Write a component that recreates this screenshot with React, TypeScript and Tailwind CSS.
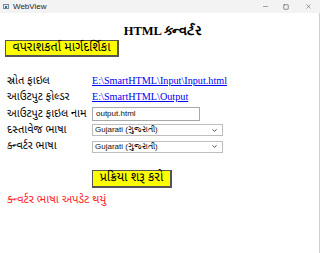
import { ChevronDown, Minus, Square, X } from 'lucide-react';

const guj = "font-['Noto_Sans_Gujarati','Lohit_Gujarati','Noto_Sans',sans-serif]";
const serif = "font-['Liberation_Serif','Times_New_Roman',serif]";
const sans = "font-['Liberation_Sans',Arial,sans-serif]";

function TitleBar() {
  return (
    <div className="flex h-[13px] items-center bg-[#f3f3f3] text-[#1f1f1f]">
      <div className="ml-[3px] flex h-[5px] w-[6px] items-center border border-[#7a8a99] bg-[#dfe8ef]">
        <div className="ml-px h-[2px] w-[2px] bg-[#2d7d9a]" />
      </div>
      <span className={`ml-[4px] text-[8px] leading-none ${sans}`}>WebView</span>
      <div className="ml-auto flex items-center">
        <Minus className="h-[7px] w-[7px] text-[#333]" strokeWidth={1.5} />
        <Square className="ml-[14px] h-[6px] w-[6px] text-[#333]" strokeWidth={2} />
        <X className="ml-[16px] mr-[8px] h-[7px] w-[7px] text-[#333]" strokeWidth={1.5} />
      </div>
    </div>
  );
}

function Row({ label, h, children }: { label: string; h: string; children: React.ReactNode }) {
  return (
    <div className={`flex items-center ${h}`}>
      <span className={`w-[85px] shrink-0 text-[11px] font-[370] leading-none text-black ${guj}`}>{label}</span>
      {children}
    </div>
  );
}

function Select({ value }: { value: string }) {
  return (
    <div className="flex h-[12px] w-[131px] items-center border border-[#bdbdbd] bg-white px-[2px]">
      <span className={`text-[8px] leading-none text-[#111] ${sans}`}>{value}</span>
      <ChevronDown className="ml-auto mr-[2px] h-[7px] w-[7px] text-[#333]" strokeWidth={3} />
    </div>
  );
}

export default function App() {
  return (
    <div className="flex h-[253px] w-[320px] flex-col overflow-hidden bg-white">
      <TitleBar />
      <div className="flex-1 border-r border-[#cfcfcf] pl-[7px]">
        <h1 className={`mt-[10px] text-center text-[12.5px] font-bold leading-[16px] text-black ${serif}`}>
          HTML ક્ન્વર્ટર
        </h1>
        <button
          type="button"
          className={`-ml-[2px] mt-[1px] flex h-[17px] w-[114px] items-center justify-center border border-[#555] border-r-2 border-b-2 bg-[#ffff00] text-[12.5px] font-normal leading-none text-black ${guj}`}
        >
          વપરાશકર્તા માર્ગદર્શિકા
        </button>

        <div className="mt-[16px] flex flex-col">
          <Row label="સ્રોત ફાઇલ" h="h-[16px]">
            <a className={`text-[10.2px] leading-none text-[#0000ee] underline ${serif}`} href="#">
              E:\SmartHTML\Input\Input.html
            </a>
          </Row>
          <Row label="આઉટપુટ ફોલ્ડર" h="h-[17px]">
            <a className={`text-[10.2px] leading-none text-[#0000ee] underline ${serif}`} href="#">
              E:\SmartHTML\Output
            </a>
          </Row>
          <Row label="આઉટપુટ ફાઇલ નામ" h="h-[16px]">
            <div className="flex h-[14px] w-[108px] items-center border border-[#a9a9a9] bg-white px-[3px]">
              <span className={`text-[8px] leading-none text-[#111] ${sans}`}>output.html</span>
            </div>
          </Row>
          <Row label="દસ્તાવેજ ભાષા" h="h-[16px]">
            <Select value="Gujarati (ગુજરાતી)" />
          </Row>
          <Row label="ક્ન્વર્ટર ભાષા" h="h-[17px]">
            <Select value="Gujarati (ગુજરાતી)" />
          </Row>
        </div>

        <button
          type="button"
          className={`ml-[85px] mt-[15px] flex h-[18px] w-[80px] items-center justify-center border border-[#555] border-r-2 border-b-2 bg-[#ffff00] text-[12.5px] font-normal leading-none text-black ${guj}`}
        >
          પ્રક્રિયા શરૂ કરો
        </button>
        <p className={`mt-[6px] text-[11.5px] font-[370] leading-[14px] text-[#ff1f1f] ${guj}`}>
          ક્ન્વર્ટર ભાષા અપડેટ થયું
        </p>
      </div>
    </div>
  );
}
